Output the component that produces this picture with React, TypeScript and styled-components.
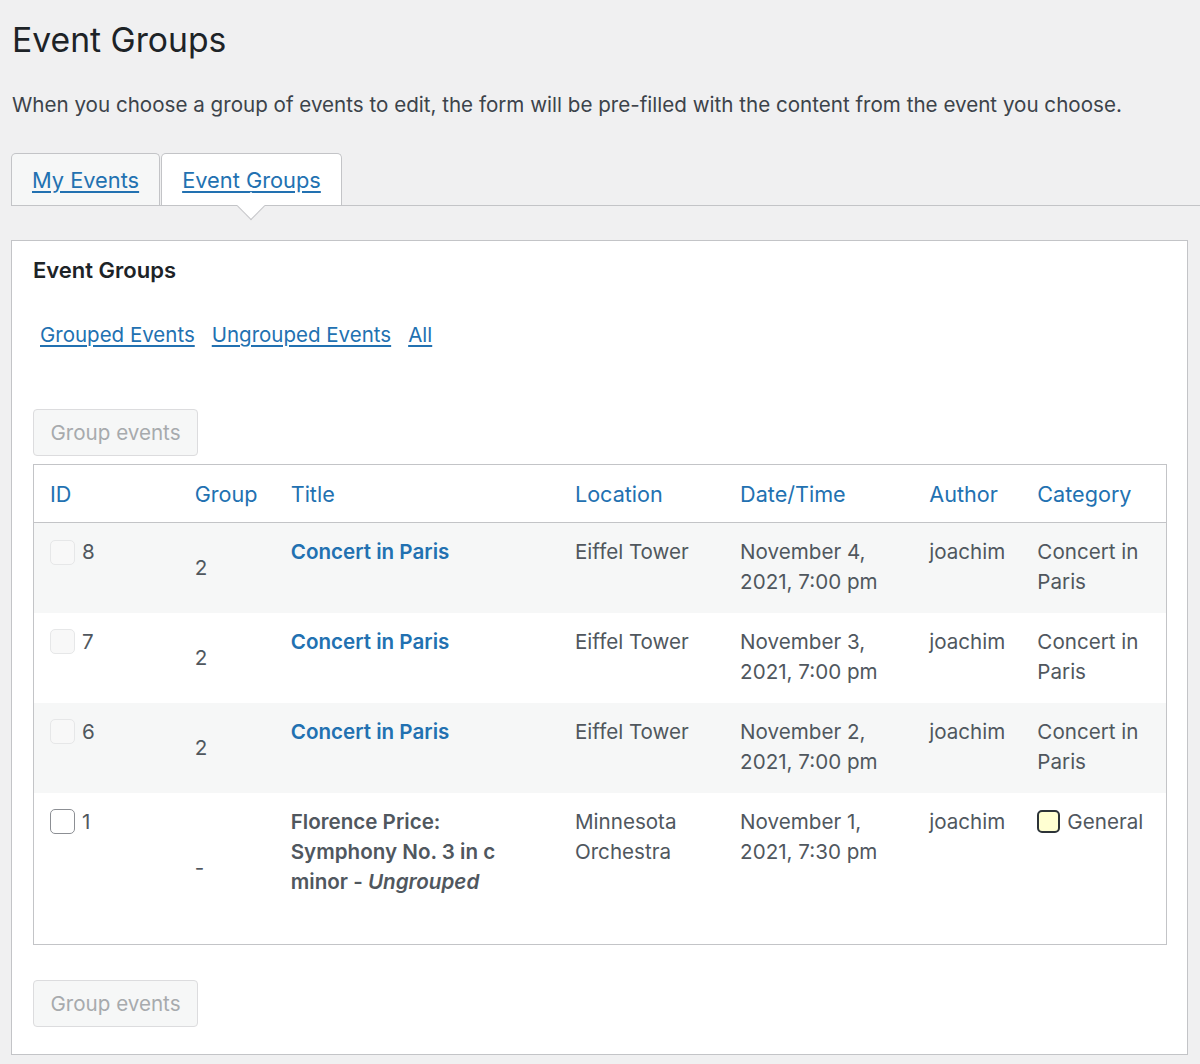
import React from 'react'
import styled, { createGlobalStyle } from 'styled-components'

const GlobalStyle = createGlobalStyle`
  body {
    margin: 0;
    background: #f0f0f1;
    font-family: Inter, "Noto Sans", sans-serif;
    color: #3c434a;
  }
`

type EventRow = {
  id: number;
  group: string;
  title: string;
  grouped: boolean;
  location: string;
  date: string;
  author: string;
  category: string;
}

const rows: EventRow[] = [
  { id: 8, group: '2', title: 'Concert in Paris', grouped: true, location: 'Eiffel Tower', date: 'November 4, 2021, 7:00 pm', author: 'joachim', category: 'Concert in Paris' },
  { id: 7, group: '2', title: 'Concert in Paris', grouped: true, location: 'Eiffel Tower', date: 'November 3, 2021, 7:00 pm', author: 'joachim', category: 'Concert in Paris' },
  { id: 6, group: '2', title: 'Concert in Paris', grouped: true, location: 'Eiffel Tower', date: 'November 2, 2021, 7:00 pm', author: 'joachim', category: 'Concert in Paris' },
  { id: 1, group: '-', title: 'Florence Price: Symphony No. 3 in c minor', grouped: false, location: 'Minnesota Orchestra', date: 'November 1, 2021, 7:30 pm', author: 'joachim', category: 'General' },
]

const Wrap = styled.div`
  padding: 0 12px 0 11px;
`

const PageTitle = styled.h1`
  margin: 18px 0 0 1px;
  font-size: 33.7px;
  font-weight: 400;
  line-height: 44px;
  color: #1d2327;
`

const Intro = styled.p`
  margin: 28px 0 0 1px;
  font-size: 20.6px;
  line-height: 30px;
  color: #3c434a;
`

const TabBar = styled.div`
  margin: 33px -12px 0 0;
  display: flex;
  gap: 1px;
  border-bottom: 1px solid #c3c4c7;
`

const Tab = styled.a<{ $active?: boolean }>`
  position: relative;
  display: block;
  height: 52px;
  line-height: 52px;
  padding: 0 20px;
  font-size: 21.8px;
  color: #2271b1;
  text-decoration: underline;
  text-underline-offset: 3px;
  background: ${p => (p.$active ? '#fff' : '#f6f7f7')};
  border: 1px solid #c3c4c7;
  border-bottom: none;
  border-radius: 5px 5px 0 0;
  box-sizing: border-box;
  cursor: pointer;
`

const TabArrow = styled.span`
  position: absolute;
  left: 50%;
  bottom: -11px;
  width: 19px;
  height: 19px;
  margin-left: -10px;
  background: #fff;
  border-right: 1px solid #c3c4c7;
  border-bottom: 1px solid #c3c4c7;
  transform: rotate(45deg);
`

const Panel = styled.div`
  margin-top: 34px;
  background: #fff;
  border: 1px solid #c3c4c7;
  padding: 14px 20px 27px 21px;
`

const PanelTitle = styled.h2`
  margin: 0;
  font-size: 22px;
  font-weight: 600;
  line-height: 30px;
  color: #1d2327;
`

const Filters = styled.div`
  margin: 35px 0 0 7px;
  display: flex;
  gap: 17px;
  line-height: 30px;
`

const FilterLink = styled.a`
  font-size: 20.5px;
  color: #2271b1;
  text-decoration: underline;
  text-underline-offset: 3px;
  cursor: pointer;
`

const Button = styled.button<{ $top: number }>`
  display: block;
  margin-top: ${p => p.$top}px;
  height: 47px;
  width: 165px;
  font-family: inherit;
  font-size: 20.6px;
  color: #a7aaad;
  background: #f6f7f7;
  border: 1px solid #dcdcde;
  border-radius: 4px;
`

const Table = styled.table`
  margin-top: 8px;
  width: 100%;
  border: 1px solid #c3c4c7;
  border-collapse: collapse;
  table-layout: fixed;
  font-size: 20.6px;
  line-height: 30px;
`

const Th = styled.th<{ $w: number }>`
  box-sizing: border-box;
  width: ${p => p.$w}px;
  height: 58px;
  padding: 0 16px;
  text-align: left;
  font-size: 21.6px;
  font-weight: 400;
  color: #2271b1;
  border-bottom: 1px solid #c3c4c7;
`

const Tr = styled.tr<{ $striped: boolean; $h: number }>`
  height: ${p => p.$h}px;
  background: ${p => (p.$striped ? '#f6f7f7' : '#fff')};
`

const Td = styled.td<{ $middle?: boolean }>`
  padding: 14px 16px;
  vertical-align: ${p => (p.$middle ? 'middle' : 'top')};
  color: #50575e;
`

const IdCell = styled.div`
  display: flex;
  align-items: center;
  gap: 7px;
`

const Check = styled.span<{ $disabled: boolean }>`
  display: inline-block;
  width: 25px;
  height: 25px;
  box-sizing: border-box;
  border-radius: 5px;
  border: 1px solid ${p => (p.$disabled ? '#e6e7e8' : '#8c8f94')};
  background: ${p => (p.$disabled ? '#f8f8f8' : '#fff')};
`

const TitleLink = styled.a`
  font-weight: 600;
  color: #2271b1;
  text-decoration: none;
`

const TitleText = styled.strong`
  font-weight: 600;
  color: #50575e;
  em { font-style: italic; }
`

const Category = styled.div`
  display: flex;
  align-items: center;
  gap: 7px;
`

const Swatch = styled.span`
  display: inline-block;
  width: 23px;
  height: 23px;
  box-sizing: border-box;
  border: 2px solid #2c3338;
  border-radius: 5px;
  background: #ffffd2;
`

const columns: [string, number][] = [
  ['ID', 145], ['Group', 96], ['Title', 284], ['Location', 165],
  ['Date/Time', 189], ['Author', 108], ['Category', 145],
]

export default function App() {
  return (
    <Wrap>
      <GlobalStyle />
      <PageTitle>Event Groups</PageTitle>
      <Intro>When you choose a group of events to edit, the form will be pre-filled with the content from the event you choose.</Intro>
      <TabBar>
        <Tab>My Events</Tab>
        <Tab $active>
          Event Groups
          <TabArrow />
        </Tab>
      </TabBar>
      <Panel>
        <PanelTitle>Event Groups</PanelTitle>
        <Filters>
          <FilterLink>Grouped Events</FilterLink>
          <FilterLink>Ungrouped Events</FilterLink>
          <FilterLink>All</FilterLink>
        </Filters>
        <Button $top={59} disabled>Group events</Button>
        <Table>
          <thead>
            <tr>
              {columns.map(([label, w]) => (
                <Th key={label} $w={w}>{label}</Th>
              ))}
            </tr>
          </thead>
          <tbody>
            {rows.map((r, i) => (
              <Tr key={r.id} $striped={i % 2 === 0} $h={r.grouped ? 90 : 152}>
                <Td>
                  <IdCell>
                    <Check $disabled={r.grouped} />
                    {r.id}
                  </IdCell>
                </Td>
                <Td $middle>{r.group}</Td>
                <Td>
                  {r.grouped
                    ? <TitleLink>{r.title}</TitleLink>
                    : <TitleText>{r.title} - <em>Ungrouped</em></TitleText>}
                </Td>
                <Td>{r.location}</Td>
                <Td>{r.date}</Td>
                <Td>{r.author}</Td>
                <Td>
                  {r.grouped ? r.category : (
                    <Category>
                      <Swatch />
                      {r.category}
                    </Category>
                  )}
                </Td>
              </Tr>
            ))}
          </tbody>
        </Table>
        <Button $top={35} disabled>Group events</Button>
      </Panel>
    </Wrap>
  )
}
